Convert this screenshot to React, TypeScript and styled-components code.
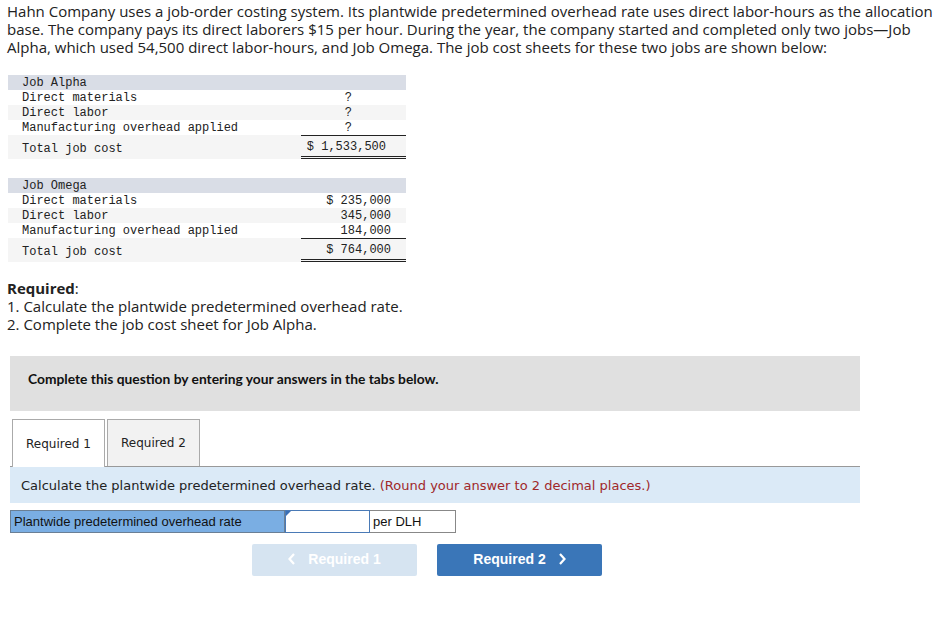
import React from "react";
import styled, { createGlobalStyle } from "styled-components";

const Global = createGlobalStyle`
  html, body { margin: 0; padding: 0; background: #fff; }
  body { font-family: "Open Sans", sans-serif; color: #222; }
`;

const Page = styled.div`
  padding: 2px 0 0 7px;
  width: 931px;
`;

const Intro = styled.p`
  margin: 0;
  font-family: "Open Sans", sans-serif;
  font-size: 15px;
  line-height: 18px;
  color: #222;
`;

const Sheet = styled.div<{ $top: number }>`
  margin-top: ${(p) => p.$top}px;
  margin-left: 1px;
  width: 398px;
  font-family: "Liberation Mono", monospace;
  font-size: 12px;
  color: #222;
`;

const Row = styled.div<{ $bg?: string; $h?: number }>`
  display: grid;
  grid-template-columns: 293px 105px;
  height: ${(p) => p.$h ?? 15}px;
  background: ${(p) => p.$bg ?? "#fff"};
  align-items: stretch;
`;

const Label = styled.div<{ $pt?: number }>`
  padding-left: 14px;
  padding-top: ${(p) => p.$pt ?? 0}px;
  white-space: pre;
  display: flex;
  align-items: center;
`;

const Value = styled.div<{ $align?: string; $pr?: number; $top?: boolean; $dbl?: boolean; $pt?: number }>`
  height: 100%;
  box-sizing: border-box;
  display: flex;
  align-items: center;
  justify-content: ${(p) => p.$align ?? "flex-end"};
  padding-right: ${(p) => p.$pr ?? 16}px;
  padding-top: ${(p) => p.$pt ?? 0}px;
  white-space: pre;
  border-top: ${(p) => (p.$top ? "1px solid #222" : "none")};
  border-bottom: ${(p) => (p.$dbl ? "3px double #222" : "none")};
`;

const Req = styled.div`
  margin-top: 17px;
  font-size: 15px;
  color: #222;
`;

const ReqLine = styled.div`
  height: 18px;
  line-height: 18px;
  white-space: nowrap;
`;

const Bold = styled.span`
  font-weight: 700;
`;

const Notice = styled.div`
  margin-top: 23px;
  margin-left: 3px;
  width: 850px;
  height: 55px;
  background: #e0e0e0;
  display: flex;
  align-items: center;
  padding: 0 0 10px 18px;
  box-sizing: border-box;
  font-family: Lato, sans-serif;
  font-weight: 700;
  font-size: 13.8px;
  color: #111;
`;

const Tabs = styled.div`
  margin-top: 8px;
  margin-left: 3px;
  width: 850px;
  display: flex;
  gap: 2px;
  padding-left: 2px;
  box-sizing: border-box;
  border-bottom: 1px solid #999;
`;

const Tab = styled.div<{ $active?: boolean }>`
  width: 93px;
  box-sizing: border-box;
  border: 1px solid #aaa;
  border-bottom: none;
  background: ${(p) => (p.$active ? "#fff" : "#f2f2f2")};
  margin-bottom: ${(p) => (p.$active ? "-1px" : "0")};
  height: ${(p) => (p.$active ? 48 : 47)}px;
  display: flex;
  align-items: center;
  justify-content: center;
  font-family: "DejaVu Sans", Verdana, sans-serif;
  font-size: 12px;
  color: #222;
  padding-bottom: ${(p) => (p.$active ? 0 : 1)}px;
`;

const Instruction = styled.div`
  margin-left: 3px;
  width: 850px;
  height: 36px;
  background: #dbeaf7;
  display: flex;
  align-items: center;
  padding: 0 0 0 11px;
  box-sizing: border-box;
  font-family: "DejaVu Sans", Verdana, sans-serif;
  font-size: 13px;
  color: #222;
`;

const Hint = styled.span`
  color: #a0282a;
`;

const AnswerRow = styled.div`
  margin-top: 7px;
  margin-left: 3px;
  display: flex;
  height: 23px;
  font-family: "Liberation Sans", Arial, sans-serif;
  font-size: 13px;
`;

const AnswerLabel = styled.div`
  width: 275px;
  box-sizing: border-box;
  background: #7aaee3;
  border: 1px solid #6a7f95;
  display: flex;
  align-items: center;
  padding-left: 3px;
  color: #111;
`;

const InputWrap = styled.div`
  position: relative;
  width: 85px;
  box-sizing: border-box;
  border: 1px solid #4a7ab6;
  background: #fff;
`;

const Flag = styled.div`
  position: absolute;
  left: 0;
  top: 0;
  width: 0;
  height: 0;
  border-top: 5px solid #3a6fb5;
  border-right: 5px solid transparent;
`;

const Unit = styled.div`
  width: 86px;
  box-sizing: border-box;
  border: 1px solid #888;
  border-left: none;
  display: flex;
  align-items: center;
  padding-left: 3px;
  color: #111;
`;

const Nav = styled.div`
  margin-top: 11px;
  margin-left: 245px;
  display: flex;
  gap: 20px;
`;

const NavButton = styled.div<{ $disabled?: boolean }>`
  width: 165px;
  height: 32px;
  border-radius: 2px;
  background: ${(p) => (p.$disabled ? "#d6e4f1" : "#3a76b8")};
  color: #fff;
  display: flex;
  align-items: center;
  justify-content: center;
  gap: 12px;
  padding-bottom: 2px;
  box-sizing: border-box;
  font-family: "Liberation Sans", Arial, sans-serif;
  font-weight: 700;
  font-size: 14px;
`;

const Chevron = ({ dir }: { dir: "left" | "right" }) => (
  <svg width="8" height="12" viewBox="0 0 8 12">
    <path
      d={dir === "left" ? "M6 1 L1.5 6 L6 11" : "M2 1 L6.5 6 L2 11"}
      fill="none"
      stroke="#fff"
      strokeWidth="2.2"
    />
  </svg>
);

type Line = { label: string; value: string; align?: string; pr?: number };

const JobSheet = ({
  title,
  lines,
  total,
  totalPr,
  top,
}: {
  title: string;
  lines: Line[];
  total: string;
  totalPr: number;
  top: number;
}) => (
  <Sheet $top={top}>
    <Row $bg="#d9dde6">
      <Label>{title}</Label>
      <div />
    </Row>
    {lines.map((l, i) => (
      <Row key={l.label} $bg={i === 1 ? "#f5f5f5" : "#fff"}>
        <Label>{l.label}</Label>
        <Value $align={l.align} $pr={l.pr}>
          {l.value}
        </Value>
      </Row>
    ))}
    <Row $bg="#f5f5f5" $h={24}>
      <Label $pt={4}>Total job cost</Label>
      <Value $pr={totalPr} $top $dbl $pt={2}>
        {total}
      </Value>
    </Row>
  </Sheet>
);

export default function App() {
  return (
    <>
      <Global />
      <Page>
        <Intro>
          Hahn Company uses a job-order costing system. Its plantwide predetermined overhead rate uses direct
          labor-hours as the allocation base. The company pays its direct laborers $15 per hour. During the year,
          the company started and completed only two jobs—Job Alpha, which used 54,500 direct labor-hours, and Job
          Omega. The job cost sheets for these two jobs are shown below:
        </Intro>
        <JobSheet
          top={19}
          title="Job Alpha"
          lines={[
            { label: "Direct materials", value: "?", pr: 54 },
            { label: "Direct labor", value: "?", pr: 54 },
            { label: "Manufacturing overhead applied", value: "?", pr: 54 },
          ]}
          total="$ 1,533,500"
          totalPr={20}
        />
        <JobSheet
          top={19}
          title="Job Omega"
          lines={[
            { label: "Direct materials", value: "$ 235,000", pr: 15 },
            { label: "Direct labor", value: "345,000", pr: 15 },
            { label: "Manufacturing overhead applied", value: "184,000", pr: 15 },
          ]}
          total="$ 764,000"
          totalPr={15}
        />
        <Req>
          <ReqLine>
            <Bold>Required</Bold>:
          </ReqLine>
          <ReqLine>1. Calculate the plantwide predetermined overhead rate.</ReqLine>
          <ReqLine>2. Complete the job cost sheet for Job Alpha.</ReqLine>
        </Req>
        <Notice>Complete this question by entering your answers in the tabs below.</Notice>
        <Tabs>
          <Tab $active>Required 1</Tab>
          <Tab>Required 2</Tab>
        </Tabs>
        <Instruction>
          Calculate the plantwide predetermined overhead rate.&nbsp;
          <Hint>(Round your answer to 2 decimal places.)</Hint>
        </Instruction>
        <AnswerRow>
          <AnswerLabel>Plantwide predetermined overhead rate</AnswerLabel>
          <InputWrap>
            <Flag />
          </InputWrap>
          <Unit>per DLH</Unit>
        </AnswerRow>
        <Nav>
          <NavButton $disabled>
            <Chevron dir="left" />
            Required 1
          </NavButton>
          <NavButton>
            Required 2
            <Chevron dir="right" />
          </NavButton>
        </Nav>
      </Page>
    </>
  );
}
